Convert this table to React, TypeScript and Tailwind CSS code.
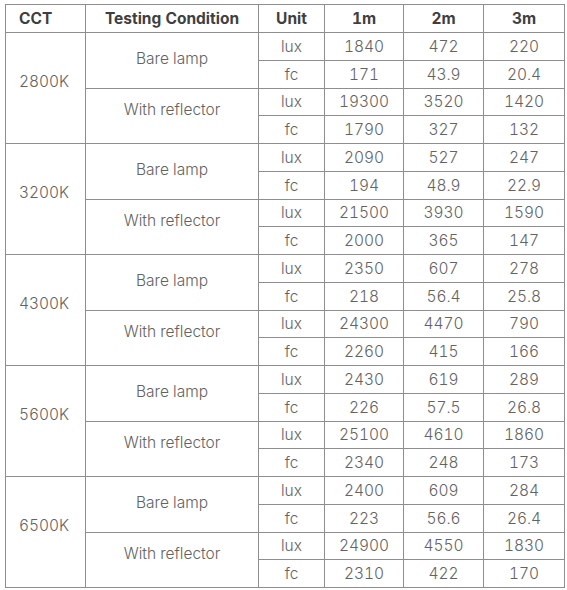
import React from "react";

type Block = { cct: string; rows: [string, string, string][] };

const data: Block[] = [
  { cct: "2800K", rows: [["1840", "472", "220"], ["171", "43.9", "20.4"], ["19300", "3520", "1420"], ["1790", "327", "132"]] },
  { cct: "3200K", rows: [["2090", "527", "247"], ["194", "48.9", "22.9"], ["21500", "3930", "1590"], ["2000", "365", "147"]] },
  { cct: "4300K", rows: [["2350", "607", "278"], ["218", "56.4", "25.8"], ["24300", "4470", "790"], ["2260", "415", "166"]] },
  { cct: "5600K", rows: [["2430", "619", "289"], ["226", "57.5", "26.8"], ["25100", "4610", "1860"], ["2340", "248", "173"]] },
  { cct: "6500K", rows: [["2400", "609", "284"], ["223", "56.6", "26.4"], ["24900", "4550", "1830"], ["2310", "422", "170"]] },
];

const cell = "border border-[#8e8e8e] text-center align-middle p-0";

export default function App() {
  return (
    <div className="w-[567px] h-[590px] bg-white pt-[4px] pl-[5px]" style={{ fontFamily: "Inter, 'Noto Sans', sans-serif" }}>
      <table className="border-collapse table-fixed w-[559px] text-[15.5px] text-[#636363] font-light tabular-nums">
        <colgroup>
          <col className="w-[80px]" />
          <col className="w-[173px]" />
          <col className="w-[66px]" />
          <col className="w-[79px]" />
          <col className="w-[80px]" />
          <col className="w-[81px]" />
        </colgroup>
        <thead>
          <tr className="h-[28px] text-[#3f3f3f] font-semibold text-[15.5px]">
            <th className="border border-[#8e8e8e] text-left align-middle p-0 pl-[13px]">CCT</th>
            <th className={cell}>Testing Condition</th>
            <th className={cell}>Unit</th>
            <th className={cell}>1m</th>
            <th className={cell}>2m</th>
            <th className={cell}>3m</th>
          </tr>
        </thead>
        <tbody>
          {data.map((b) =>
            b.rows.map((r, i) => (
              <tr key={b.cct + i} className="h-[27.75px]">
                {i === 0 && (
                  <td rowSpan={4} className="border border-[#8e8e8e] text-left align-middle p-0 pl-[13px] pb-[12px]">
                    {b.cct}
                  </td>
                )}
                {i === 0 && (
                  <td rowSpan={2} className="border border-[#8e8e8e] text-center align-middle p-0 pb-[4px]">
                    Bare lamp
                  </td>
                )}
                {i === 2 && (
                  <td rowSpan={2} className="border border-[#8e8e8e] text-center align-middle p-0 pb-[12px]">
                    With reflector
                  </td>
                )}
                <td className={cell}>{i % 2 === 0 ? "lux" : "fc"}</td>
                <td className={cell}>{r[0]}</td>
                <td className={cell}>{r[1]}</td>
                <td className={cell}>{r[2]}</td>
              </tr>
            ))
          )}
        </tbody>
      </table>
    </div>
  );
}
